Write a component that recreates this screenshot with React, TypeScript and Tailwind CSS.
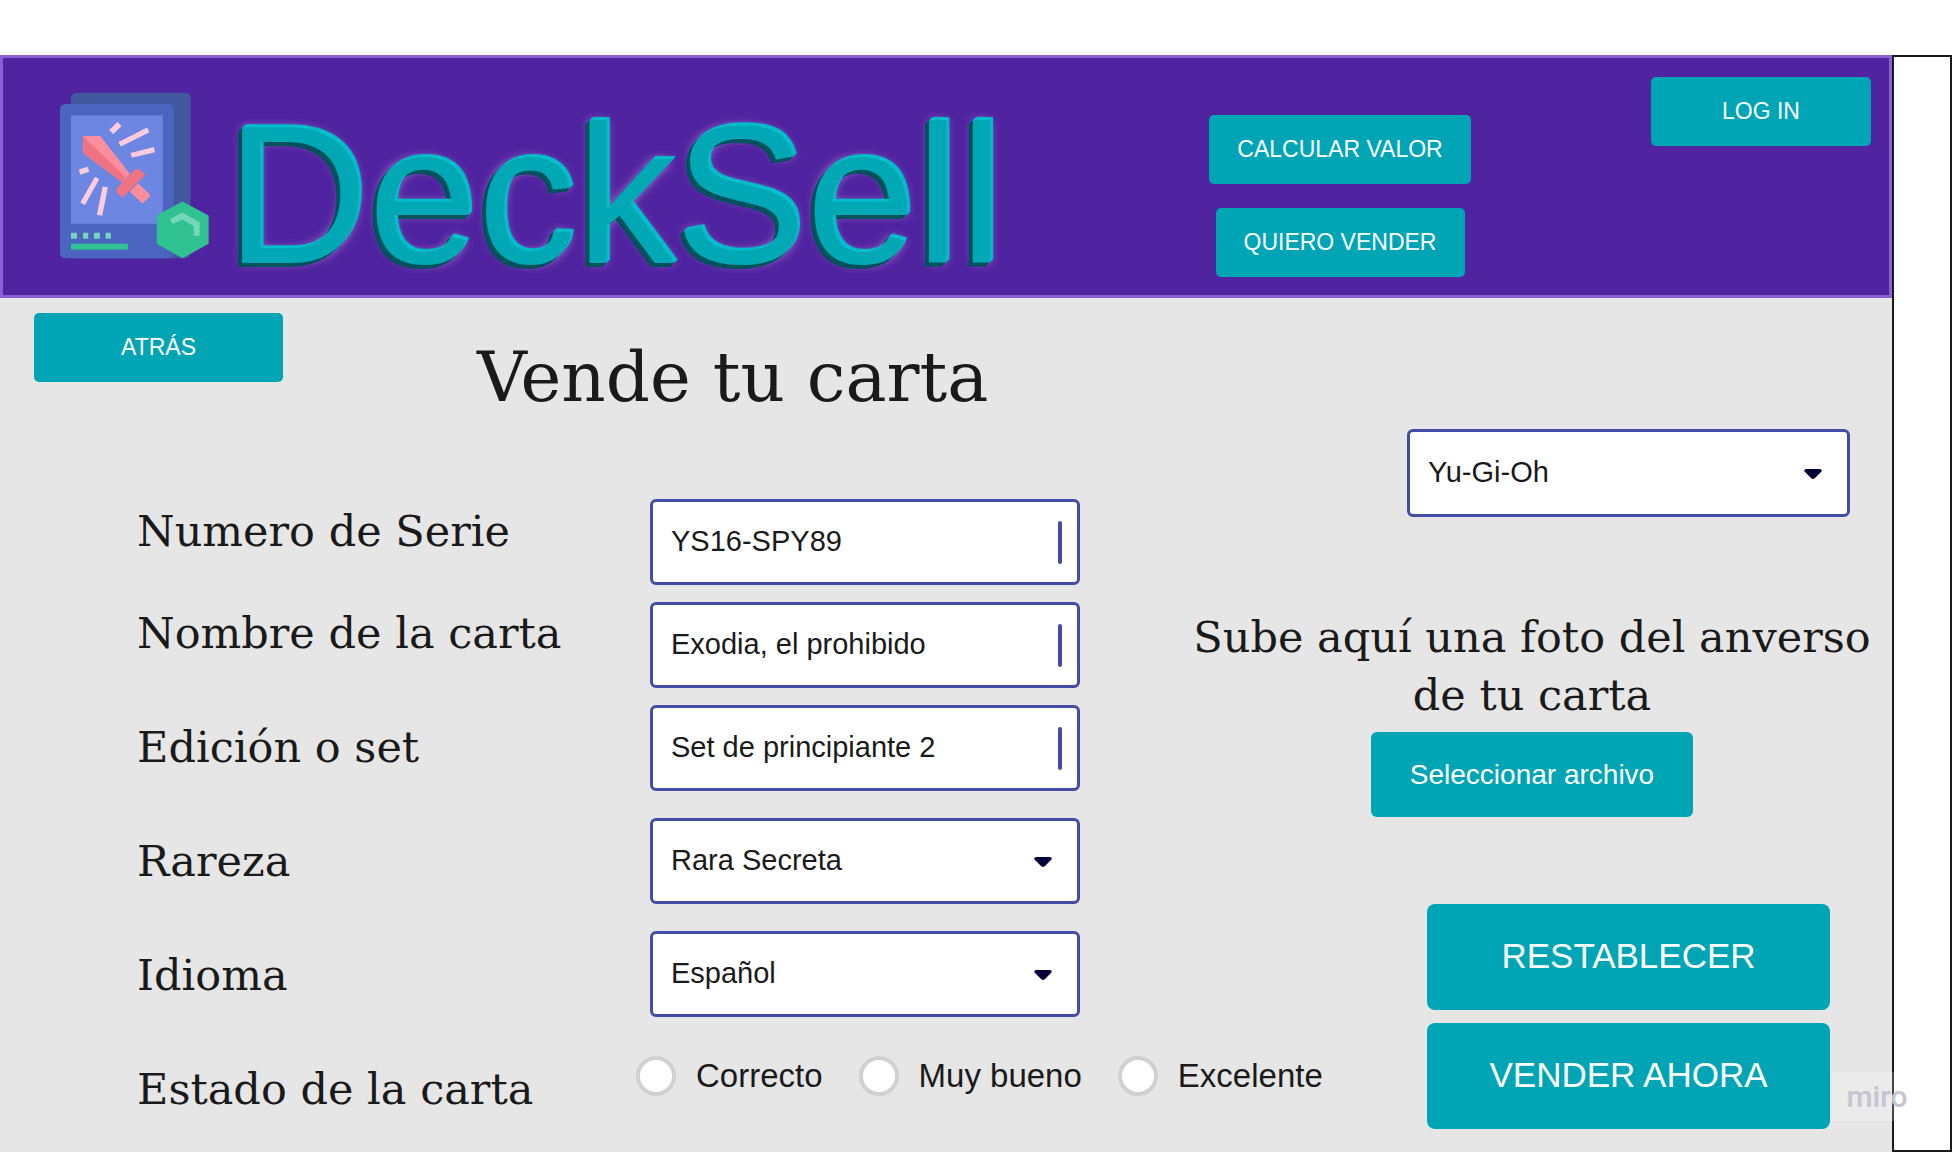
import type { ReactNode } from "react";

const slab = "font-['Roboto_Slab','DejaVu_Serif',serif] text-[#1a1a1a]";

function CardLogo() {
  return (
    <svg viewBox="180 157 448 500" className="h-[167px] w-[149px] shrink-0" aria-hidden="true">
      <rect x="213" y="158" width="360" height="498" rx="16" fill="#41579e" />
      <rect x="180" y="192" width="342" height="464" rx="16" fill="#4a64c0" />
      <rect x="213" y="226" width="276" height="326" fill="#6c86e2" />
      <path d="M249 288H301L390 402L368 428L249 339Z" fill="#fa8e9d" />
      <path d="M249 288L380 415L368 428L249 339Z" fill="#f07384" />
      <path d="M390 455L415 430L453 467L428 492Z" fill="#fa8e9d" />
      <path d="M350 457Q349 448 354 442L400 394Q410 384 420 390L437 405L368 474Z" fill="#f07384" />
      <g fill="#fccbdc">
        <path d="M328 270L353 246L365 258L340 283Z" />
        <path d="M356 306L442 263L449 277L363 320Z" />
        <path d="M392 339L462 321L465 337L396 354Z" />
        <path d="M237 389L263 381L268 396L241 405Z" />
        <path d="M285 411L298 418L255 496L241 488Z" />
        <path d="M308 440L324 442L307 528L291 525Z" />
      </g>
      <g fill="#79d2bd">
        <rect x="213" y="579" width="18" height="18" />
        <rect x="249" y="579" width="16" height="18" />
        <rect x="282" y="579" width="18" height="18" />
        <rect x="317" y="579" width="16" height="18" />
      </g>
      <rect x="213" y="612" width="171" height="18" fill="#30c391" />
      <path d="M548 485L627 527V612L548 656L471 612V527Z" fill="#30c391" />
      <path d="M511 538L548 518L600 548V588H582V559L548 539L518 553Z" fill="#75d7b8" />
    </svg>
  );
}

function Caret() {
  return (
    <svg viewBox="0 0 18 11" className="h-[11px] w-[18px] shrink-0" aria-hidden="true">
      <path d="M2 0H16Q19 1 17 3L11 9Q9 11 7 9L1 3Q-1 1 2 0Z" fill="#050038" />
    </svg>
  );
}

function Button({ className, children }: { className: string; children: ReactNode }) {
  return (
    <button
      type="button"
      className={`cursor-pointer bg-[#00a5b5] text-center whitespace-nowrap text-white ${className}`}
    >
      {children}
    </button>
  );
}

const small = "h-[69px] rounded-[5px] text-[23px]";
const large = "h-[106px] w-[403px] rounded-lg pb-[2px] text-[35px]";
const field = "flex items-center rounded-md border-[3px] border-[#434da6] bg-white pl-[18px]";
const fieldText =
  "h-full min-w-0 flex-1 appearance-none bg-transparent pb-[2px] text-[29px] text-[#1a1a1a] outline-none";

function TextField({ id, value }: { id: string; value: string }) {
  return (
    <div className={`h-[86px] w-[430px] pr-[15px] ${field}`}>
      <input id={id} type="text" defaultValue={value} className={fieldText} />
      <span className="h-[43px] w-1 rounded-full bg-[#434da6]" />
    </div>
  );
}

function SelectField({ id, value, label, className }: { id: string; value: string; label?: string; className: string }) {
  return (
    <div className={`${field} pt-[2px] pr-[25px] ${className}`}>
      <select id={id} aria-label={label} defaultValue={value} className={fieldText}>
        <option>{value}</option>
      </select>
      <Caret />
    </div>
  );
}

const labels = [
  { id: "edicion", text: "Edición o set" },
  { id: "rareza", text: "Rareza" },
  { id: "idioma", text: "Idioma" },
];

export default function App() {
  return (
    <div className="flex min-h-screen flex-col bg-white pt-[55px] font-['Liberation_Sans',Arial,sans-serif]">
      <div className="relative flex flex-1">
        <div className="flex min-w-0 flex-1 flex-col bg-[#e6e6e6]">
          <header className="flex h-[243px] items-start border-[3px] border-[#8a5fd3] bg-[#5023a0] pr-[18px] pl-[57px]">
            <div className="flex items-start gap-[17px] pt-[34px]">
              <CardLogo />
              <h1 className="pt-[5px] text-[197px] leading-none text-[#00a7b5] [text-shadow:1px_-1px_0_#00bfcb,2px_-2px_0_#00bfcb,3px_-3px_1px_#00bfcb,-1px_1px_0_#00525c,-2px_2px_0_#00525c,-3px_3px_0_#00525c,-4px_4px_0_#00525c,0_0_10px_#a67fd0]">
                DeckSell
              </h1>
            </div>
            <nav className="mr-[180px] ml-auto flex flex-col items-center gap-6 pt-[57px]">
              <Button className={`${small} w-[262px]`}>CALCULAR VALOR</Button>
              <Button className={`${small} w-[249px]`}>QUIERO VENDER</Button>
            </nav>
            <Button className={`${small} mt-[19px] w-[220px]`}>LOG IN</Button>
          </header>

          <form className="flex flex-1 items-start">
            <section className="min-w-0 flex-1">
              <div className="flex items-start gap-[194px] pt-[15px] pl-[34px]">
                <Button className={`${small} w-[249px]`}>ATRÁS</Button>
                <h2 className={`${slab} pt-4 text-[69px] leading-[96px] whitespace-nowrap`}>Vende tu carta</h2>
              </div>
              <div className="flex items-start pt-[74px] pl-[137px]">
                <div className={`${slab} flex w-[513px] shrink-0 flex-col gap-14 pt-[3px] text-[43px] leading-[58px] whitespace-nowrap`}>
                  <div className="flex flex-col gap-11">
                    <label htmlFor="serie">Numero de Serie</label>
                    <label htmlFor="nombre">Nombre de la carta</label>
                  </div>
                  {labels.map((l) => (
                    <label key={l.id} htmlFor={l.id}>
                      {l.text}
                    </label>
                  ))}
                  <span id="estado">Estado de la carta</span>
                </div>
                <div className="flex flex-col gap-[27px]">
                  <div className="flex flex-col gap-[17px]">
                    <TextField id="serie" value="YS16-SPY89" />
                    <TextField id="nombre" value="Exodia, el prohibido" />
                    <TextField id="edicion" value="Set de principiante 2" />
                  </div>
                  <SelectField id="rareza" value="Rara Secreta" className="h-[86px] w-[430px]" />
                  <SelectField id="idioma" value="Español" className="h-[86px] w-[430px]" />
                  <div
                    role="radiogroup"
                    aria-labelledby="estado"
                    className="relative z-10 mt-3 -ml-[14px] flex w-max gap-9 text-[33px] leading-9 text-[#1a1a1a]"
                  >
                    {["Correcto", "Muy bueno", "Excelente"].map((t) => (
                      <label key={t} className="flex items-center gap-5">
                        <input
                          type="radio"
                          name="estado"
                          className="size-10 appearance-none rounded-full border-4 border-[#d1d1d1] bg-white checked:bg-[#434da6]"
                        />
                        <span>{t}</span>
                      </label>
                    ))}
                  </div>
                </div>
              </div>
            </section>

            <section className="flex w-[720px] shrink-0 flex-col items-center pt-[131px]">
              <SelectField
                id="juego"
                label="Juego"
                value="Yu-Gi-Oh"
                className="mr-[42px] h-[88px] w-[443px] self-end"
              />
              <p className={`${slab} pt-[91px] text-center text-[43px] leading-[58px] whitespace-nowrap`}>
                Sube aquí una foto del anverso
                <br />
                de tu carta
              </p>
              <Button className="mt-2 h-[85px] w-[322px] rounded-md text-[28px]">Seleccionar archivo</Button>
              <div className="mt-[87px] mr-[62px] flex flex-col gap-[13px] self-end">
                <Button className={large}>RESTABLECER</Button>
                <Button className={large}>VENDER AHORA</Button>
              </div>
            </section>
          </form>
        </div>
        <aside className="w-[60px] shrink-0 border-2 border-[#1a1a1a] bg-white" />
        <span className="absolute right-[29px] bottom-[31px] flex h-[49px] w-[92px] items-center justify-center bg-white/20 font-[Roboto,sans-serif] text-[30px] leading-none font-medium text-[#c6c4d0]">
          miro
        </span>
      </div>
    </div>
  );
}
